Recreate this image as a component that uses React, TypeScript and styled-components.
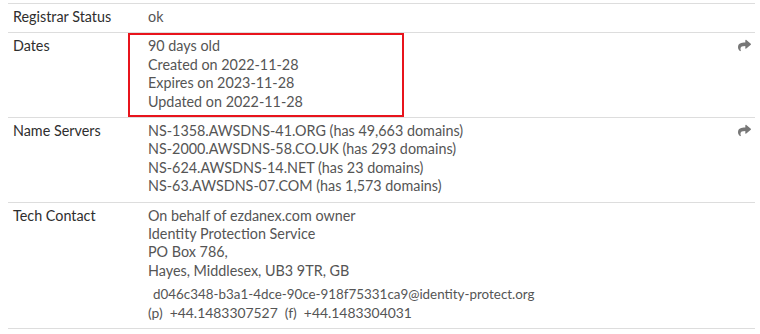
import React from "react";
import styled, { createGlobalStyle } from "styled-components";
import { FaShare } from "react-icons/fa";

const GlobalStyle = createGlobalStyle`
  html, body {
    margin: 0;
    padding: 0;
    background: #fff;
  }
  body {
    font-family: Lato, "Open Sans", "Liberation Sans", sans-serif;
    font-size: 14.35px;
    line-height: 18.4px;
    color: #555;
  }
`;

const Page = styled.div`
  padding: 3px 5px 0 8px;
`;

const Table = styled.div`
  width: 747px;
  border-top: 1px solid #ddd;
`;

const Row = styled.div`
  position: relative;
  display: flex;
  border-bottom: 1px solid #ddd;
`;

const Label = styled.div`
  width: 135px;
  flex: none;
  padding: 4px 5px 6px;
  box-sizing: border-box;
  color: #2e2e2e;
`;

const Value = styled.div`
  flex: 1;
  padding: 4px 5px 6px;
`;

const Line = styled.div`
  white-space: nowrap;
`;

const Email = styled(Line)`
  margin-top: 5px;
  padding-left: 5px;
  font-size: 13.4px;
`;

const Phones = styled(Line)`
  display: flex;
  gap: 7px;
  font-size: 13.9px;
`;

const ShareLink = styled.a`
  position: absolute;
  top: 6px;
  right: 4px;
  color: #777;
  font-size: 13px;
  line-height: 1;
`;

const Highlight = styled.div`
  position: absolute;
  left: 120px;
  top: 0;
  width: 276px;
  bottom: 0;
  border: 2px solid #e8141c;
  box-sizing: border-box;
  pointer-events: none;
`;

type Entry = {
  label: string;
  lines: string[];
  share?: boolean;
  marked?: boolean;
};

const entries: Entry[] = [
  { label: "Registrar Status", lines: ["ok"] },
  {
    label: "Dates",
    lines: ["90 days old", "Created on 2022-11-28", "Expires on 2023-11-28", "Updated on 2022-11-28"],
    share: true,
    marked: true,
  },
  {
    label: "Name Servers",
    lines: [
      "NS-1358.AWSDNS-41.ORG (has 49,663 domains)",
      "NS-2000.AWSDNS-58.CO.UK (has 293 domains)",
      "NS-624.AWSDNS-14.NET (has 23 domains)",
      "NS-63.AWSDNS-07.COM (has 1,573 domains)",
    ],
    share: true,
  },
];

export default function App() {
  return (
    <Page>
      <GlobalStyle />
      <Table>
        {entries.map((e) => (
          <Row key={e.label}>
            <Label>{e.label}</Label>
            <Value>
              {e.lines.map((l) => (
                <Line key={l}>{l}</Line>
              ))}
            </Value>
            {e.share && (
              <ShareLink>
                <FaShare />
              </ShareLink>
            )}
            {e.marked && <Highlight />}
          </Row>
        ))}
        <Row>
          <Label>Tech Contact</Label>
          <Value>
            <Line>On behalf of ezdanex.com owner</Line>
            <Line>Identity Protection Service</Line>
            <Line>PO Box 786,</Line>
            <Line>Hayes, Middlesex, UB3 9TR, GB</Line>
            <Email>d046c348-b3a1-4dce-90ce-918f75331ca9@identity-protect.org</Email>
            <Phones>
              <span>(p)</span>
              <span>+44.1483307527</span>
              <span>(f)</span>
              <span>+44.1483304031</span>
            </Phones>
          </Value>
        </Row>
      </Table>
    </Page>
  );
}
